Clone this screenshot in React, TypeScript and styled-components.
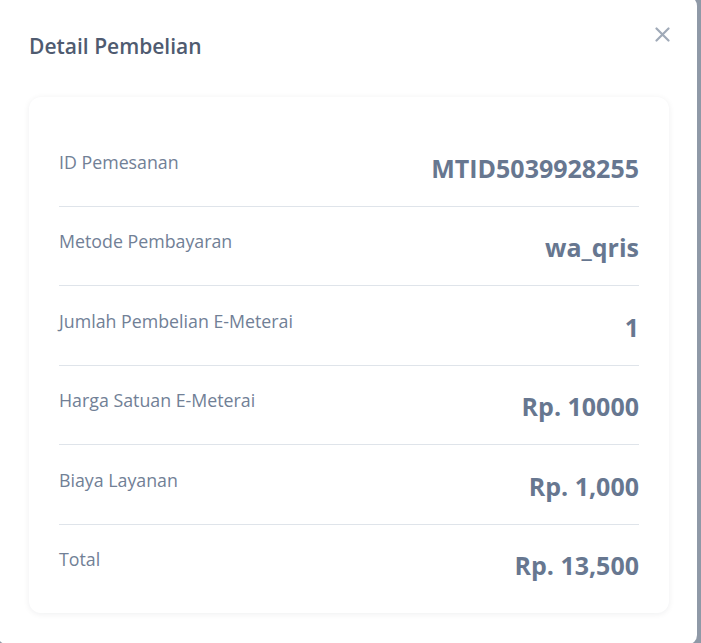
import React from "react";
import styled, { createGlobalStyle } from "styled-components";

const Global = createGlobalStyle`
  html, body {
    margin: 0;
    padding: 0;
    background: #8f99a7;
    overflow: hidden;
  }
  body {
    font-family: "Open Sans", "Noto Sans", sans-serif;
  }
`;

const Modal = styled.div`
  box-sizing: border-box;
  width: 699px;
  height: 649px;
  margin: -4px 0 0 -2px;
  background: #ffffff;
  border-radius: 10px;
  padding: 34.5px 27px 0 31px;
  display: flex;
  flex-direction: column;
`;

const Header = styled.div`
  display: flex;
  justify-content: space-between;
  align-items: flex-start;
`;

const Title = styled.h2`
  margin: 0;
  font-size: 21px;
  line-height: 30px;
  font-weight: 600;
  color: #4f5b70;
`;

const CloseButton = styled.button`
  border: none;
  background: none;
  padding: 0;
  margin-top: -4px;
  width: 15px;
  height: 15px;
  display: flex;
  cursor: pointer;
  color: #a0aab8;
`;

const Card = styled.div`
  margin: 36.5px 1px 0 0;
  background: #ffffff;
  border-radius: 12px;
  box-shadow: 0 1px 6px rgba(15, 23, 42, 0.07);
  padding: 30px 30px 9px;
`;

const Row = styled.div<{ $last?: boolean }>`
  display: flex;
  justify-content: space-between;
  align-items: flex-start;
  padding: 22.5px 0 ${(p) => (p.$last ? "22.5px" : "22px")};
  border-bottom: ${(p) => (p.$last ? "none" : "1px solid #dfe4ea")};
`;

const Label = styled.span`
  font-size: 17.8px;
  line-height: 24px;
  font-weight: 400;
  color: #718096;
`;

const Value = styled.span`
  margin-top: 2px;
  font-size: 25px;
  line-height: 32px;
  font-weight: 700;
  color: #677790;
`;

const rows: [string, string][] = [
  ["ID Pemesanan", "MTID5039928255"],
  ["Metode Pembayaran", "wa_qris"],
  ["Jumlah Pembelian E-Meterai", "1"],
  ["Harga Satuan E-Meterai", "Rp. 10000"],
  ["Biaya Layanan", "Rp. 1,000"],
  ["Total", "Rp. 13,500"],
];

export default function App() {
  return (
    <>
      <Global />
      <Modal>
        <Header>
          <Title>Detail Pembelian</Title>
          <CloseButton aria-label="Close">
            <svg width="15" height="15" viewBox="0 0 15 15" fill="none">
              <path
                d="M1.5 1.5L13.5 13.5M13.5 1.5L1.5 13.5"
                stroke="currentColor"
                strokeWidth="2.2"
                strokeLinecap="round"
              />
            </svg>
          </CloseButton>
        </Header>
        <Card>
          {rows.map(([label, value], i) => (
            <Row key={label} $last={i === rows.length - 1}>
              <Label>{label}</Label>
              <Value>{value}</Value>
            </Row>
          ))}
        </Card>
      </Modal>
    </>
  );
}
